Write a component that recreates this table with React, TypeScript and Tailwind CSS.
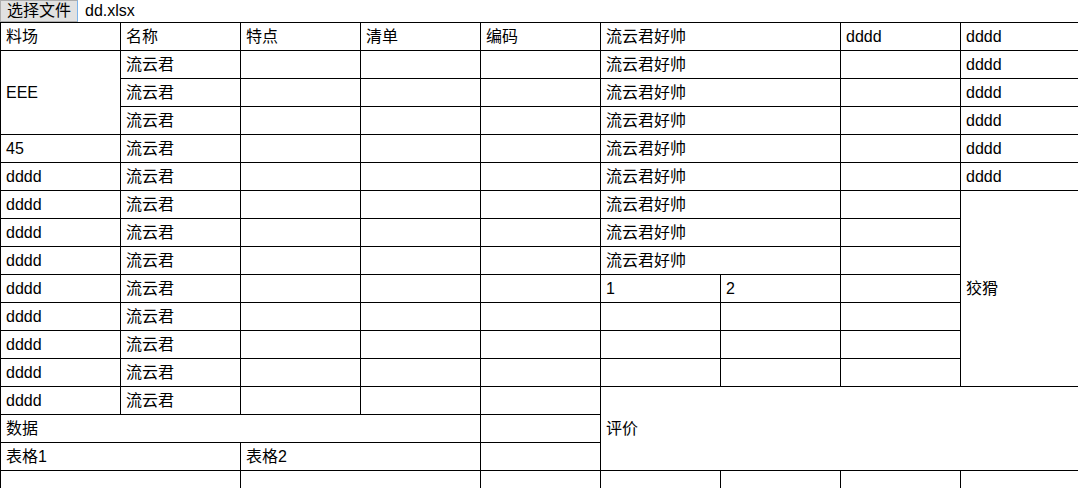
import React from 'react';

const td = 'border border-black h-[28px] px-[5px] py-0 align-middle whitespace-nowrap';

export default function App() {
  const mid = [0, 1, 2];
  const lower = [0, 1, 2];
  return (
    <div className="h-screen w-full overflow-hidden bg-white text-black text-[16px]" style={{ fontFamily: '"Liberation Sans", "Noto Sans CJK SC", sans-serif' }}>
      <div className="flex items-center h-[22px]">
        <button className="h-[22px] px-[6px] bg-[#e1e1e1] border border-[#adadad] border-r-[#7eb4ea] text-[16px] leading-none">选择文件</button>
        <span className="ml-[7px] leading-none">dd.xlsx</span>
      </div>
      <table className="table-fixed border-collapse w-[1081px]">
        <colgroup>
          {[0, 1, 2, 3, 4, 5, 6, 7, 8].map((i) => (
            <col key={i} className="w-[120px]" />
          ))}
        </colgroup>
        <tbody>
          <tr>
            <td className={td}>料场</td>
            <td className={td}>名称</td>
            <td className={td}>特点</td>
            <td className={td}>清单</td>
            <td className={td}>编码</td>
            <td className={td} colSpan={2}>流云君好帅</td>
            <td className={td}>dddd</td>
            <td className={td}>dddd</td>
          </tr>
          {mid.map((i) => (
            <tr key={'e' + i}>
              {i === 0 && <td className={td} rowSpan={3}>EEE</td>}
              <td className={td}>流云君</td>
              <td className={td}></td>
              <td className={td}></td>
              <td className={td}></td>
              <td className={td} colSpan={2}>流云君好帅</td>
              <td className={td}></td>
              <td className={td}>dddd</td>
            </tr>
          ))}
          {['45', 'dddd'].map((a, i) => (
            <tr key={'f' + i}>
              <td className={td}>{a}</td>
              <td className={td}>流云君</td>
              <td className={td}></td>
              <td className={td}></td>
              <td className={td}></td>
              <td className={td} colSpan={2}>流云君好帅</td>
              <td className={td}></td>
              <td className={td}>dddd</td>
            </tr>
          ))}
          {mid.map((i) => (
            <tr key={'g' + i}>
              <td className={td}>dddd</td>
              <td className={td}>流云君</td>
              <td className={td}></td>
              <td className={td}></td>
              <td className={td}></td>
              <td className={td} colSpan={2}>流云君好帅</td>
              <td className={td}></td>
              {i === 0 && <td className={td} rowSpan={7}>狡猾</td>}
            </tr>
          ))}
          <tr>
            <td className={td}>dddd</td>
            <td className={td}>流云君</td>
            <td className={td}></td>
            <td className={td}></td>
            <td className={td}></td>
            <td className={td}>1</td>
            <td className={td}>2</td>
            <td className={td}></td>
          </tr>
          {lower.map((i) => (
            <tr key={'h' + i}>
              <td className={td}>dddd</td>
              <td className={td}>流云君</td>
              <td className={td}></td>
              <td className={td}></td>
              <td className={td}></td>
              <td className={td}></td>
              <td className={td}></td>
              <td className={td}></td>
            </tr>
          ))}
          <tr>
            <td className={td}>dddd</td>
            <td className={td}>流云君</td>
            <td className={td}></td>
            <td className={td}></td>
            <td className={td}></td>
            <td className={td} colSpan={4} rowSpan={3}>评价</td>
          </tr>
          <tr>
            <td className={td} colSpan={4}>数据</td>
            <td className={td}></td>
          </tr>
          <tr>
            <td className={td} colSpan={2}>表格1</td>
            <td className={td} colSpan={2}>表格2</td>
            <td className={td}></td>
          </tr>
          <tr>
            <td className={td} colSpan={2}></td>
            <td className={td} colSpan={2}></td>
            <td className={td}></td>
            <td className={td}></td>
            <td className={td}></td>
            <td className={td}></td>
            <td className={td}></td>
          </tr>
        </tbody>
      </table>
    </div>
  );
}
